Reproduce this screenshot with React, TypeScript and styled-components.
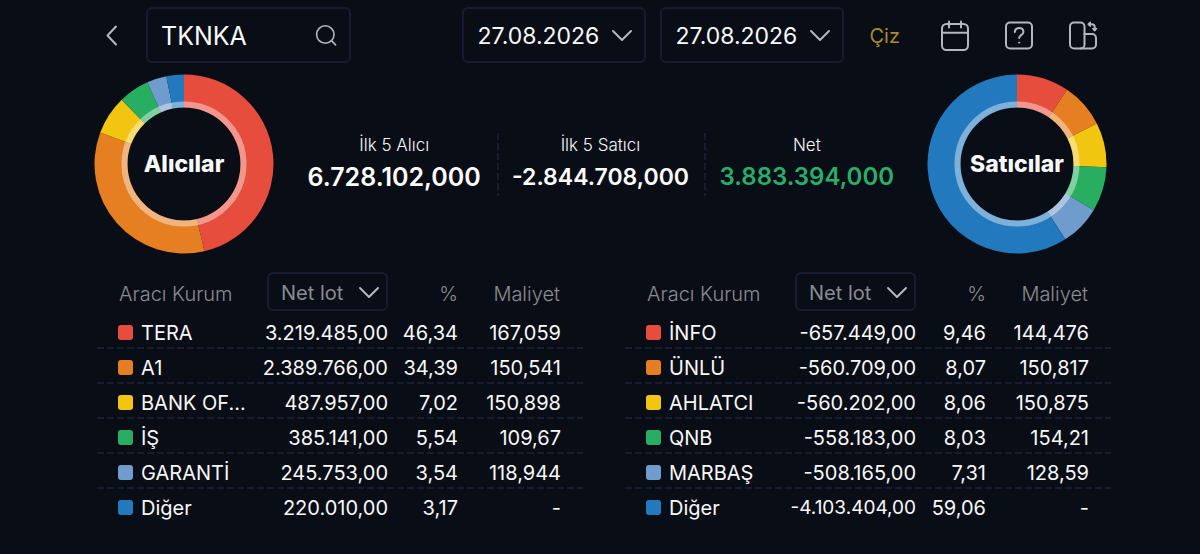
import React from "react";
import styled, { createGlobalStyle } from "styled-components";

const colors = {
  page: "#090d15",
  line: "#181c30",
  text: "#f8f9fb",
  muted: "#8a8c92",
  icon: "#b4b7c2",
  gold: "#a98a2c",
  green: "#27ae6b",
};

const palette = ["#e74d3d", "#e67f22", "#f2c511", "#27ae60", "#6f9ccc", "#2279be"];

const GlobalStyle = createGlobalStyle`
  *, *::before, *::after { box-sizing: border-box; }
  body {
    margin: 0;
    background: ${colors.page};
    color: ${colors.text};
    font-family: Inter, "Liberation Sans", sans-serif;
  }
  button, input, select { font: inherit; color: inherit; }
`;

const Page = styled.main`
  min-height: 100vh;
  padding: 7px 89px 28px 97px;
`;

const Toolbar = styled.header`
  display: flex;
  align-items: center;
  gap: 14px;
  padding-right: 12px;
`;

const IconButton = styled.button`
  display: flex;
  align-items: center;
  justify-content: center;
  flex: none;
  width: 32px;
  height: 40px;
  padding: 2px 0 0;
  border: 0;
  background: none;
  color: ${colors.icon};
  cursor: pointer;
`;

const BackButton = styled(IconButton)`
  width: 30px;
`;

const SearchBox = styled.label`
  display: flex;
  align-items: center;
  width: 205px;
  height: 56px;
  margin-left: 5px;
  padding: 2px 12px 0 13px;
  border: 2px solid ${colors.line};
  border-radius: 6px;
  color: ${colors.icon};
`;

const SearchInput = styled.input`
  flex: 1;
  min-width: 0;
  padding: 0;
  border: 0;
  outline: 0;
  background: none;
  color: ${colors.text};
  font-size: 25px;
`;

const Actions = styled.div`
  display: flex;
  align-items: center;
  gap: 14px;
  margin-left: auto;
`;

const DrawButton = styled.button`
  margin: 0 25px 0 12px;
  padding: 2px 0 0;
  border: 0;
  background: none;
  color: ${colors.gold};
  font-size: 20px;
  cursor: pointer;
`;

const IconGroup = styled.div`
  display: flex;
  gap: 32px;
`;

const SelectBox = styled.span<{ $compact?: boolean }>`
  display: inline-grid;
  align-items: center;
  width: ${(p) => (p.$compact ? 121 : 184)}px;
  height: ${(p) => (p.$compact ? 39 : 56)}px;
  border: 2px solid ${colors.line};
  border-radius: 6px;

  > * { grid-area: 1 / 1; }
  > svg {
    justify-self: end;
    margin-right: ${(p) => (p.$compact ? 6 : 11)}px;
    color: ${colors.icon};
    pointer-events: none;
  }
`;

const Select = styled.select<{ $compact?: boolean }>`
  width: 100%;
  height: 100%;
  padding: 2px 0 0 ${(p) => (p.$compact ? 12 : 14)}px;
  appearance: none;
  border: 0;
  background: none;
  font-size: ${(p) => (p.$compact ? 20 : 23)}px;
  color: ${(p) => (p.$compact ? colors.muted : colors.text)};
  font-weight: 400;
`;

const Summary = styled.section`
  display: flex;
  align-items: center;
  gap: 17px;
  margin: 11px 4px 18px -3px;
`;

const DonutBox = styled.figure`
  display: grid;
  place-items: center;
  flex: none;
  margin: 0;

  > * { grid-area: 1 / 1; }
`;

const DonutLabel = styled.figcaption`
  font-size: 23px;
  font-weight: 800;
  line-height: 28px;
`;

const Stats = styled.dl`
  display: grid;
  grid-template-columns: repeat(3, 1fr);
  flex: 1;
  margin: 0;
`;

const Stat = styled.div`
  display: flex;
  flex-direction: column;
  align-items: center;
  gap: 5px;
  height: 63px;

  & + & {
    background: repeating-linear-gradient(${colors.line} 0 7px, transparent 7px 10px) left / 2px 100% no-repeat;
  }
`;

const StatLabel = styled.dt`
  font-size: 17px;
  font-weight: 300;
  line-height: 24px;
`;

const StatValue = styled.dd<{ $size: number; $positive?: boolean }>`
  margin: 0;
  font-size: ${(p) => p.$size}px;
  font-weight: 600;
  line-height: 30px;
  color: ${(p) => (p.$positive ? colors.green : "#ffffff")};
`;

const Tables = styled.section`
  display: grid;
  grid-template-columns: 1fr 1fr;
  gap: 42px;
`;

const Table = styled.table`
  width: 100%;
  table-layout: fixed;
  border-collapse: collapse;
  font-size: 20px;
`;

const HeadCell = styled.th<{ $width?: number }>`
  width: ${(p) => (p.$width ? `${p.$width}px` : "auto")};
  height: 42px;
  padding: 2px 0 0;
  color: ${colors.muted};
  font-weight: 300;
  line-height: 24px;
  text-align: right;
  white-space: nowrap;

  &:first-child { padding-left: 22px; text-align: left; }
  &:last-child { padding-right: 23px; }
`;

const SelectCell = styled(HeadCell)`
  padding: 0;
  vertical-align: top;
`;

const Row = styled.tr`
  &:not(:last-child) {
    background: repeating-linear-gradient(90deg, ${colors.line} 0 7px, transparent 7px 10px) bottom / 100% 2px no-repeat;
  }
`;

const Cell = styled.td<{ $long?: boolean }>`
  height: 35px;
  padding: 2px 0 0;
  font-size: ${(p) => (p.$long ? 19 : 20)}px;
  line-height: 24px;
  text-align: right;
  white-space: nowrap;

  &:last-child { padding-right: 22px; }
`;

const NameCell = styled.th`
  height: 35px;
  padding: 2px 0 0 21px;
  font-weight: 400;
  line-height: 24px;
  text-align: left;
  white-space: nowrap;
`;

const Swatch = styled.span<{ $color: string }>`
  display: inline-block;
  width: 15px;
  height: 15px;
  margin-right: 8px;
  border-radius: 3px;
  background: ${(p) => p.$color};
  vertical-align: baseline;
`;

type Holder = { name: string; lot: string; share: string; cost: string };

const buyers: Holder[] = [
  { name: "TERA", lot: "3.219.485,00", share: "46,34", cost: "167,059" },
  { name: "A1", lot: "2.389.766,00", share: "34,39", cost: "150,541" },
  { name: "BANK OF...", lot: "487.957,00", share: "7,02", cost: "150,898" },
  { name: "İŞ", lot: "385.141,00", share: "5,54", cost: "109,67" },
  { name: "GARANTİ", lot: "245.753,00", share: "3,54", cost: "118,944" },
  { name: "Diğer", lot: "220.010,00", share: "3,17", cost: "-" },
];

const sellers: Holder[] = [
  { name: "İNFO", lot: "-657.449,00", share: "9,46", cost: "144,476" },
  { name: "ÜNLÜ", lot: "-560.709,00", share: "8,07", cost: "150,817" },
  { name: "AHLATCI", lot: "-560.202,00", share: "8,06", cost: "150,875" },
  { name: "QNB", lot: "-558.183,00", share: "8,03", cost: "154,21" },
  { name: "MARBAŞ", lot: "-508.165,00", share: "7,31", cost: "128,59" },
  { name: "Diğer", lot: "-4.103.404,00", share: "59,06", cost: "-" },
];

const Chevron = () => (
  <svg width="22" height="14" viewBox="0 0 22 14" fill="none" stroke="currentColor" strokeWidth="2" strokeLinecap="round" strokeLinejoin="round" aria-hidden="true">
    <path d="M2 3 11 12 20 3" />
  </svg>
);

function Dropdown({ label, value, compact }: { label: string; value: string; compact?: boolean }) {
  return (
    <SelectBox $compact={compact}>
      <Select $compact={compact} aria-label={label} defaultValue={value}>
        <option>{value}</option>
      </Select>
      <Chevron />
    </SelectBox>
  );
}

function Donut({ label, rows }: { label: string; rows: Holder[] }) {
  const values = rows.map((r) => parseFloat(r.share.replace(",", ".")));
  const total = values.reduce((a, b) => a + b, 0);
  const point = (t: number, r: number) => {
    const a = t * Math.PI * 2 - Math.PI / 2;
    return `${(90 + r * Math.cos(a)).toFixed(2)} ${(90 + r * Math.sin(a)).toFixed(2)}`;
  };
  let start = 0;
  return (
    <DonutBox>
      <svg width="180" height="180" viewBox="0 0 180 180" aria-hidden="true">
        {values.map((v, i) => {
          const from = start;
          const to = (start += v / total);
          const large = to - from > 0.5 ? 1 : 0;
          return (
            <path
              key={i}
              fill={palette[i]}
              d={`M${point(from, 89.5)}A89.5 89.5 0 ${large} 1 ${point(to, 89.5)}L${point(to, 56.5)}A56.5 56.5 0 ${large} 0 ${point(from, 56.5)}Z`}
            />
          );
        })}
        <circle cx="90" cy="90" r="59.5" fill="none" stroke="#ffffff" strokeOpacity="0.42" strokeWidth="6" />
      </svg>
      <DonutLabel>{label}</DonutLabel>
    </DonutBox>
  );
}

function HolderTable({ label, rows }: { label: string; rows: Holder[] }) {
  return (
    <Table aria-label={label}>
      <thead>
        <tr>
          <HeadCell scope="col">Aracı Kurum</HeadCell>
          <SelectCell scope="col" $width={136}>
            <Dropdown compact label={`${label} sütunu`} value="Net lot" />
          </SelectCell>
          <HeadCell scope="col" $width={70}>%</HeadCell>
          <HeadCell scope="col" $width={125}>Maliyet</HeadCell>
        </tr>
      </thead>
      <tbody>
        {rows.map((r, i) => (
          <Row key={r.name}>
            <NameCell scope="row">
              <Swatch $color={palette[i]} />
              {r.name}
            </NameCell>
            <Cell $long={r.lot.length > 12}>{r.lot}</Cell>
            <Cell>{r.share}</Cell>
            <Cell>{r.cost}</Cell>
          </Row>
        ))}
      </tbody>
    </Table>
  );
}

const stroke = {
  fill: "none",
  stroke: "currentColor",
  strokeWidth: 2,
  strokeLinecap: "round" as const,
  strokeLinejoin: "round" as const,
  "aria-hidden": true,
};

export default function App() {
  return (
    <>
      <GlobalStyle />
      <Page>
        <Toolbar>
          <BackButton aria-label="Geri">
            <svg width="14" height="22" viewBox="0 0 14 22" {...stroke}>
              <path d="M11 1.5 2.5 10.5 11 19.5" />
            </svg>
          </BackButton>
          <SearchBox>
            <SearchInput aria-label="Sembol" defaultValue="TKNKA" />
            <svg width="22" height="22" viewBox="0 0 22 22" {...stroke} strokeWidth={1.6}>
              <circle cx="10.3" cy="9.5" r="8.7" />
              <path d="m16.6 15.9 4 4" />
            </svg>
          </SearchBox>
          <Actions>
            <Dropdown label="Başlangıç tarihi" value="27.08.2026" />
            <Dropdown label="Bitiş tarihi" value="27.08.2026" />
            <DrawButton>Çiz</DrawButton>
            <IconGroup>
              <IconButton aria-label="Takvim">
                <svg width="30" height="32" viewBox="0 0 30 32" {...stroke}>
                  <rect x="2" y="4" width="26" height="26" rx="4.5" />
                  <path d="M2 12.7h26M9 1.5v6M21 1.5v6" />
                </svg>
              </IconButton>
              <IconButton aria-label="Yardım">
                <svg width="30" height="32" viewBox="0 0 30 32" {...stroke}>
                  <rect x="2" y="2.5" width="26" height="26" rx="4" />
                  <path d="M10.8 12.1c0-2.5 1.9-4 4.3-4s4.3 1.5 4.3 3.8c0 3.2-4.2 3.3-4.2 6" />
                  <circle cx="15.1" cy="22.6" r="0.6" fill="currentColor" strokeWidth="1" />
                </svg>
              </IconButton>
              <IconButton aria-label="Düzen">
                <svg width="30" height="32" viewBox="0 0 30 32" {...stroke}>
                  <rect x="2" y="2.5" width="14.5" height="26" rx="4" />
                  <path d="M16.5 14h7.5a4 4 0 0 1 4 4v6.5a4 4 0 0 1-4 4H12.5" />
                  <path d="M21 4.2h2.7a3 3 0 0 1 3 3v2.6" />
                  <path d="M22.4 2 20 4.2l2.4 2.2ZM24.6 8.6l2.1 2.2 2.1-2.2Z" fill="currentColor" strokeWidth="1.2" />
                </svg>
              </IconButton>
            </IconGroup>
          </Actions>
        </Toolbar>

        <Summary>
          <Donut label="Alıcılar" rows={buyers} />
          <Stats>
            <Stat>
              <StatLabel>İlk 5 Alıcı</StatLabel>
              <StatValue $size={25}>6.728.102,000</StatValue>
            </Stat>
            <Stat>
              <StatLabel>İlk 5 Satıcı</StatLabel>
              <StatValue $size={23}>-2.844.708,000</StatValue>
            </Stat>
            <Stat>
              <StatLabel>Net</StatLabel>
              <StatValue $size={24} $positive>3.883.394,000</StatValue>
            </Stat>
          </Stats>
          <Donut label="Satıcılar" rows={sellers} />
        </Summary>

        <Tables>
          <HolderTable label="Alıcılar" rows={buyers} />
          <HolderTable label="Satıcılar" rows={sellers} />
        </Tables>
      </Page>
    </>
  );
}
